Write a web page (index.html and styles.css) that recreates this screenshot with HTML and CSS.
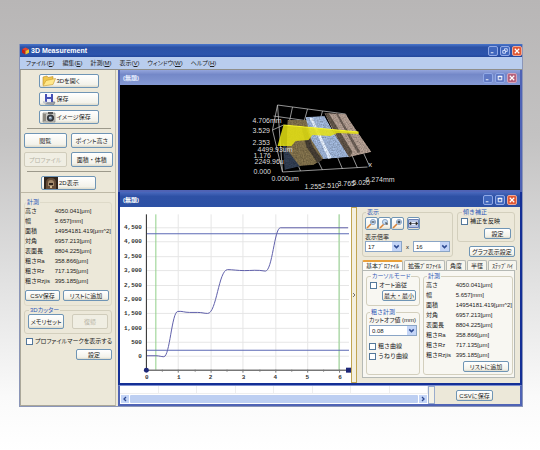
FILE: index.html
```html
<!DOCTYPE html>
<html lang="ja">
<head>
<meta charset="utf-8">
<title>3D Measurement</title>
<link rel="stylesheet" href="styles.css">
</head>
<body>
<main class="app">
  <header class="titlebar main-title">
    <svg class="logo" viewBox="0 0 8 8"><path d="M0 2 4 0 8 2 4 4z" fill="#e8442a"/><path d="M0 2 4 4V8L0 6z" fill="#c81e14"/><path d="M4 4 8 2V6L4 8z" fill="#f2c52c"/></svg>
    <h1>3D Measurement</h1>
    <div class="controls">
      <button class="ctl" aria-label="最小化"><svg viewBox="0 0 9 9"><path d="M2 6h3v1H2z" fill="#fff"/></svg></button>
      <button class="ctl" aria-label="元に戻す"><svg viewBox="0 0 9 9"><path d="M4 4V2h3v3H5M2 4h3v3H2z" fill="none" stroke="#dbe5ff"/></svg></button>
      <button class="ctl close" aria-label="閉じる"><svg viewBox="0 0 9 9"><path d="M2 2 7 7M7 2 2 7" stroke="#fff" stroke-width="1.3"/></svg></button>
    </div>
  </header>
  <nav class="menu">
    <a class="kana" href="#">ファイル(<u>F</u>)</a><a href="#">編集(<u>E</u>)</a><a href="#">計測(<u>M</u>)</a><a href="#">表示(<u>V</u>)</a><a class="kana" href="#">ウィンドウ(<u>W</u>)</a><a class="kana" href="#">ヘルプ(<u>H</u>)</a>
  </nav>
  <div class="body">
    <aside class="side">
      <section class="tools">
        <button class="btn tool kana"><svg viewBox="0 0 14 12"><path d="M1 10V2l4-1 1 1.500 5-1V5" fill="#f0c64c" stroke="#b98d28" stroke-width=".6"/><path d="M1 11 4 5.500 13.500 3.500 11 9.500z" fill="#ffe78a" stroke="#c79a2c" stroke-width=".6"/></svg>3Dを開く</button>
        <button class="btn tool"><svg viewBox="0 0 14 12"><path d="M4 8 13 9 12 11.500 3 11z" fill="#9da2ac" stroke="#60646c" stroke-width=".5"/><path d="M3 1h8v8H3z" fill="#4650b4"/><path d="M5 1h4v3H5zM5 6h4v3H5z" fill="#eef0ff"/><path d="M1 8l4 1-1 2-3-1z" fill="#c3c8d0"/></svg>保存</button>
        <button class="btn tool kana"><svg viewBox="0 0 14 12"><path d="M1 2h12v9H1z" fill="#c9c9c5" stroke="#77756f" stroke-width=".6"/><path d="M1 3h3v7H1z" fill="#8b8880"/><path d="M6 1h5v2H6z" fill="#555"/><circle cx="8.500" cy="7" r="3.600" fill="#34373c"/><circle cx="8.500" cy="7" r="1.800" fill="#7c93ab"/><circle cx="8" cy="6.500" r=".7" fill="#fff"/></svg>イメージ保存</button>
        <hr>
        <div class="pairs">
          <button class="btn">閲覧</button><button class="btn kana">ポイント高さ</button>
          <button class="btn kana" disabled>プロファイル</button><button class="btn">面積・体積</button>
        </div>
        <hr>
        <button class="btn tool two-d"><svg viewBox="0 0 14 12"><path d="M0 0h14v12H0z" fill="#30251c"/><path d="M2 12V6q0-5 5-5t5 5v6z" fill="#654d38"/><path d="M4 9V6q0-3 3-3t3 3v3z" fill="#a48b6c"/><path d="M5 6h4v2H5z" fill="#30251c"/><path d="M6 9h2v2H6z" fill="#d3bd94"/></svg>2D表示</button>
      </section>
      <section class="readout">
        <fieldset class="measure plain">
          <legend>計測</legend>
          <table>
            <tr><th>高さ</th><td>4050.041[μm]</td></tr>
            <tr><th>幅</th><td>5.657[mm]</td></tr>
            <tr><th>面積</th><td>14954181.419[μm^2]</td></tr>
            <tr><th>対角</th><td>6957.213[μm]</td></tr>
            <tr><th>表面長</th><td>8804.225[μm]</td></tr>
            <tr><th>粗さRa</th><td>358.866[μm]</td></tr>
            <tr><th>粗さRz</th><td>717.135[μm]</td></tr>
            <tr><th>粗さRzjis</th><td>395.185[μm]</td></tr>
          </table>
          <div class="actions"><button class="btn small">CSV保存</button><button class="btn small kana">リストに追加</button></div>
        </fieldset>
        <fieldset class="cutter">
          <legend class="kana">3Dカッター</legend>
          <div class="row"><button class="btn kana">メモリセット</button><button class="btn" disabled>復帰</button></div>
        </fieldset>
        <label class="check kana"><input type="checkbox">プロファイルマークを表示する</label>
        <button class="btn small set">設定</button>
      </section>
    </aside>
    <div class="mdi">
      <section class="window inactive">
        <header class="titlebar">
          <h2>(無題)</h2>
          <div class="controls">
            <button class="ctl" aria-label="最小化"><svg viewBox="0 0 9 9"><path d="M2 6h3v1H2z" fill="#fff"/></svg></button>
            <button class="ctl" aria-label="最大化"><svg viewBox="0 0 9 9"><path d="M2.500 2.500h4v4h-4zM2 3h5" fill="none" stroke="#fff"/></svg></button>
            <button class="ctl close" aria-label="閉じる"><svg viewBox="0 0 9 9"><path d="M2 2 7 7M7 2 2 7" stroke="#fff" stroke-width="1.300"/></svg></button>
          </div>
        </header>
        <svg class="scene" viewBox="120 85 399 105" role="img" aria-label="3D">
          <defs>
            <filter id="grain" x="0" y="0" width="100%" height="100%">
              <feTurbulence type="fractalNoise" baseFrequency=".7" numOctaves="2" seed="4" result="n"/>
              <feColorMatrix in="n" type="matrix" values=".9 0 0 0 -.02  .9 0 0 0 -.02  .9 0 0 0 -.02  0 0 0 0 1" result="g"/>
              <feBlend in="SourceGraphic" in2="g" mode="overlay" result="b"/>
              <feBlend in="b" in2="SourceGraphic" mode="soft-light" result="c"/>
              <feComposite in="SourceGraphic" in2="g" operator="arithmetic" k1="1.200" k2=".4" k3="0" k4="0" result="d"/>
              <feComposite in="d" in2="SourceGraphic" operator="in"/>
            </filter>
          </defs>
          <g fill="none" stroke="#b9b9b9" stroke-width=".8">
            <path d="M277 105 345 114 369 166M277 105 272 130 282 172 367 167M277 105 282 172M273 116 322 123M292 107 289 121M307 109 304 120M322 111 319 122"/>
            <path d="M272 130 283 125M300 171 295 159M322 170 315 156M342 169 336 155M357 168 350 152"/>
          </g>
          <g filter="url(#grain)">
            <path d="M282 142 287 148 301 166 284 170z" fill="#303c50"/>
            <path d="M287 120 306 120 312 140 324 158 313 165 299 166 286 149z" fill="#7f6f4a"/>
            <path d="M305 117 324 116 334 134 349 157 323 159 311 140z" fill="#9db3d6"/>
            <path d="M324 113 345 114 355 129 371 152 349 157 334 134z" fill="#b09c90"/>
            <path d="M324 113 328 113 352 152 349 158 340 143z" fill="#5f5347"/>
            <path d="M301 127 305 126 312 146 322 160 317 163 306 147z" fill="#453d33"/>
            <path d="M309 118 312 118 331 158 328 159z" fill="#dfeafa"/>
            <path d="M335 113 337 113 360 152 357 153z" fill="#6b5e55"/>
          </g>
          <path d="M277 146 283 125 358 132 358 134 337 133 330 136 312 135 308 140 295 141 291 146z" fill="#e6e312" opacity=".85"/>
          <path d="M283 125 358 132" stroke="#f6f42a"/>
          <g class="scene-text">
            <text x="252" y="123">4.706mm</text><text x="252" y="133">3.529</text><text x="252" y="145">2.353</text>
            <text x="257" y="152">4499.93um</text><text x="253" y="158">1.176</text><text x="254" y="164">2249.96u</text>
            <text x="253" y="174">0.000</text><text x="271" y="181">0.000um</text>
            <text x="304" y="189">1.255</text><text x="321" y="188">2.510</text><text x="337" y="186">3.765</text><text x="352" y="185">5.020</text><text x="365" y="182">6.274mm</text><text x="368" y="167">x</text>
          </g>
        </svg>
      </section>
      <section class="window active">
        <header class="titlebar">
          <h2>(無題)</h2>
          <div class="controls">
            <button class="ctl" aria-label="最小化"><svg viewBox="0 0 9 9"><path d="M2 6h3v1H2z" fill="#fff"/></svg></button>
            <button class="ctl" aria-label="最大化"><svg viewBox="0 0 9 9"><path d="M2.500 2.500h4v4h-4zM2 3h5" fill="none" stroke="#fff"/></svg></button>
            <button class="ctl close" aria-label="閉じる"><svg viewBox="0 0 9 9"><path d="M2 2 7 7M7 2 2 7" stroke="#fff" stroke-width="1.300"/></svg></button>
          </div>
        </header>
        <div class="work">
          <svg class="chart" viewBox="120 207 232 176" role="img" aria-label="プロファイル">
            <path d="M147 227.500H350M147 241.500H350M147 256.500H350M147 270.500H350M147 285.500H350M147 299.500H350M147 313.500H350M147 328.500H350M147 342.500H350M147 356.500H350M178.500 214V370M211.500 214V370M243.500 214V370M276.500 214V370M308.500 214V370M340.500 214V370" stroke="#e6e6e6"/>
            <path d="M156 214V370M340 214V370" stroke="#8fd088"/>
            <path d="M147 233.500H350M147 350.500H350" stroke="#5b68b4"/>
            <path d="M147 356H156C160 356 161 357 164 357C170 357 172 312 178 311.500C183 311 184 312.500 190 312.500H198C203 312.500 204 313.500 208 313.500C217 313.500 219 270 228 269.500C233 269.500 238 270.500 245 270.500S258 269.500 266 271C273 271 275 228 281 227.500H349" fill="none" stroke="#5f5fa9"/>
            <path d="M146.500 214V370.500" stroke="#222"/>
            <path d="M146 370.500H350" stroke="#333"/>
            <path d="M162.500 370v2M178.500 370v3M195.500 370v2M211.500 370v3M227.500 370v2M243.500 370v3M260.500 370v2M276.500 370v3M292.500 370v2M308.500 370v3M324.500 370v2M340.500 370v3" stroke="#777"/>
            <circle cx="146.500" cy="370.500" r="2.500" fill="#1d2779"/><path d="M347 368h5v5h-5z" fill="#1d2779"/>
            <g class="axis" text-anchor="end">
              <text x="142" y="229">4,500</text><text x="142" y="243">4,000</text><text x="142" y="258">3,500</text><text x="142" y="272">3,000</text><text x="142" y="287">2,500</text><text x="142" y="301">2,000</text><text x="142" y="315">1,500</text><text x="142" y="330">1,000</text><text x="142" y="344">500</text><text x="142" y="358">0</text>
            </g>
            <g class="axis" text-anchor="middle">
              <text x="147" y="379">0</text><text x="179" y="379">1</text><text x="211" y="379">2</text><text x="244" y="379">3</text><text x="276" y="379">4</text><text x="308" y="379">5</text><text x="341" y="379">6</text>
            </g>
          </svg>
          <button class="splitter" aria-label="折りたたむ"><svg viewBox="0 0 4 6"><path d="M1 1 3 3 1 5" fill="none" stroke="#555" stroke-width=".8"/></svg></button>
          <div class="panel">
            <div class="top">
              <fieldset class="display">
                <legend>表示</legend>
                <div class="zooms">
                  <button class="btn icon" aria-label="縮小"><svg viewBox="0 0 11 11"><path d="M1 10 5 6" stroke="#d98238" stroke-width="1.600"/><circle cx="7" cy="4" r="2.600" fill="#c8def5" stroke="#7b97bb" stroke-width=".8"/><path d="M5.500 4h3" stroke="#222"/></svg></button>
                  <button class="btn icon" aria-label="等倍"><svg viewBox="0 0 11 11"><path d="M1 10 5 6" stroke="#d98238" stroke-width="1.600"/><circle cx="6" cy="4" r="2.600" fill="#c8def5" stroke="#7b97bb" stroke-width=".8"/><path d="M6 5h2v2" fill="none" stroke="#444"/></svg></button>
                  <button class="btn icon" aria-label="拡大"><svg viewBox="0 0 11 11"><path d="M1 10 5 6" stroke="#d98238" stroke-width="1.600"/><circle cx="7" cy="4" r="2.600" fill="#c8def5" stroke="#7b97bb" stroke-width=".8"/><path d="M5.500 4h3M7 2.500v3" stroke="#222"/></svg></button>
                  <button class="btn icon fit" aria-label="全体"><svg viewBox="0 0 11 11"><path d="M.5 1.500h10v8H.5z" fill="#e8f0ff" stroke="#6a80b8"/><path d="M1 3h9M1 8h9" stroke="#6a80b8" stroke-width=".8"/><path d="M1 5.500 3 4v3zM10 5.500 8 4v3zM3 5.500h5" fill="#222" stroke="#222" stroke-width=".6"/></svg></button>
                </div>
                <label class="lbl" for="sx">表示倍率</label>
                <div class="ratio">
                  <span class="combo"><select id="sx"><option>17</option></select><svg viewBox="0 0 8 8"><path d="M2 3 4 5 6 3" fill="none" stroke="#2d4a92" stroke-width="1.300"/></svg></span>
                  <span>x</span>
                  <span class="combo"><select aria-label="縦倍率"><option>16</option></select><svg viewBox="0 0 8 8"><path d="M2 3 4 5 6 3" fill="none" stroke="#2d4a92" stroke-width="1.300"/></svg></span>
                </div>
              </fieldset>
              <div class="tilt-col">
                <fieldset class="tilt">
                  <legend>傾き補正</legend>
                  <label class="check"><input type="checkbox">補正を反映</label>
                  <button class="btn small">設定</button>
                </fieldset>
                <button class="btn small graph kana">グラフ表示設定</button>
              </div>
            </div>
            <div class="tabs" role="tablist">
              <button class="on" role="tab">基本ﾌﾟﾛﾌｧｲﾙ</button><button role="tab">拡張ﾌﾟﾛﾌｧｲﾙ</button><button role="tab">角度</button><button role="tab">半径</button><button role="tab">ｽﾃｯﾌﾟﾊｲ</button>
            </div>
            <div class="page">
              <div class="col">
                <fieldset class="cursor">
                  <legend class="kana">カーソルモード</legend>
                  <label class="check kana"><input type="checkbox">オート追従</label>
                  <button class="btn small">最大・最小</button>
                </fieldset>
                <fieldset class="rough">
                  <legend>粗さ計測</legend>
                  <label class="lbl kana" for="cut">カットオフ値 (mm)</label>
                  <span class="combo"><select id="cut"><option>0.08</option></select><svg viewBox="0 0 8 8"><path d="M2 3 4 5 6 3" fill="none" stroke="#2d4a92" stroke-width="1.300"/></svg></span>
                  <label class="check"><input type="checkbox">粗さ曲線</label>
                  <label class="check"><input type="checkbox">うねり曲線</label>
                </fieldset>
              </div>
              <fieldset class="measure">
                <legend>計測</legend>
                <table>
                  <tr><th>高さ</th><td>4050.041[μm]</td></tr>
                  <tr><th>幅</th><td>5.657[mm]</td></tr>
                  <tr><th>面積</th><td>14954181.419[μm^2]</td></tr>
                  <tr><th>対角</th><td>6957.213[μm]</td></tr>
                  <tr><th>表面長</th><td>8804.225[μm]</td></tr>
                  <tr><th>粗さRa</th><td>358.866[μm]</td></tr>
                  <tr><th>粗さRz</th><td>717.135[μm]</td></tr>
                  <tr><th>粗さRzjis</th><td>395.185[μm]</td></tr>
                </table>
                <button class="btn small add kana">リストに追加</button>
              </fieldset>
            </div>
          </div>
        </div>
      </section>
      <section class="window lower">
        <div class="list">
          <div class="cells"><i></i><i></i><i></i><i></i><i></i><i></i><i></i><i></i></div>
          <div class="scroll">
            <button aria-label="左へ"><svg viewBox="0 0 8 8"><path d="M5 2 3 4 5 6" fill="none" stroke="#2d4a92" stroke-width="1.300"/></svg></button>
            <div class="thumb"></div>
            <button aria-label="右へ"><svg viewBox="0 0 8 8"><path d="M3 2 5 4 3 6" fill="none" stroke="#2d4a92" stroke-width="1.300"/></svg></button>
          </div>
        </div>
        <div class="split2"></div>
        <div class="save"><button class="btn small">CSVに保存</button></div>
      </section>
    </div>
  </div>
</main>
</body>
</html>
```
FILE: styles.css
```css
* { box-sizing: border-box; }
html { min-height: 100%; }
body {
  margin: 0;
  padding: 44px 17px 44px 19px;
  background: linear-gradient(#b8b6b6 0, #c3c2c2 30%, #dfdfdf 60%, #fafafa 88%, #fff 100%);
  font: 6px/8px "Liberation Sans", "Noto Sans CJK JP", sans-serif;
  color: #222;
}
button, select, input, h1, h2 { font: inherit; color: inherit; margin: 0; padding: 0; }
svg { display: block; flex: none; }
.kana { font-feature-settings: "palt"; }

.app { background: #ece8d9; border: 1px solid #8b96b8; border-top: 0; }
.titlebar { display: flex; align-items: center; height: 15px; padding: 0 3px; color: #fff; font-weight: bold; }
.main-title { height: 13px; padding: 0 0 0 2px; background: linear-gradient(#4a76cc 0, #2b51a6 25%, #2c54ac 80%, #23479b 100%); gap: 2px; }
h1 { font-size: 7px; font-weight: bold; }
h2 { font-weight: bold; }
.logo { width: 7px; height: 8px; }
.controls { display: flex; gap: 2px; margin-left: auto; }
.ctl { width: 10px; height: 10px; border: 1px solid #91a9e6; border-radius: 2px; background: #4067bd; }
.ctl svg { width: 8px; height: 8px; }
.ctl.close { background: #df5835; border-color: #eea896; }

.menu { display: flex; align-items: center; gap: 8px; height: 12px; padding-left: 6px; background: #b9cdee; }
.menu a { color: #222; text-decoration: none; }

.body { display: flex; gap: 2px; border-top: 1px solid #8f8f8b; }
.side { display: flex; flex-direction: column; width: 96px; border-left: 1px solid #aaa799; }
.tools { display: flex; flex-direction: column; align-items: center; gap: 4px; padding: 4px 2px 2px 3px; border-right: 1px solid #c6c1af; border-bottom: 1px solid #bdb8a6; }
.btn {
  display: flex; align-items: center; justify-content: center;
  height: 15px; border: 1px solid #6f95b5; border-radius: 2px;
  background: linear-gradient(#fff, #f3f2ea 80%, #dcdacb);
  white-space: nowrap;
}
.btn:disabled { color: #b5b2a3; border-color: #d0ccbb; background: #f0eee3; }
.small { height: 11px; }
.tool { width: 60px; height: 14px; justify-content: flex-start; gap: 1px; padding-left: 2px; }
.tool svg { width: 14px; height: 12px; }
.two-d { width: 55px; }
hr { width: 84px; margin: 0; border: 0; border-top: 1px solid #9c998b; }
.pairs { display: grid; grid-template-columns: 1fr 1fr; gap: 4px; width: 100%; }

.readout { display: flex; flex: 1; flex-direction: column; padding: 5px 3px 0 3px; border-right: 1px solid #c6c1af; border-bottom: 1px solid #aaa799; }
fieldset { min-width: 0; margin: 0; padding: 0 3px; border: 1px solid #d3cfbd; border-radius: 3px; }
legend { margin-left: 1px; padding: 0 1px; color: #2f58b8; }
table { border-collapse: collapse; width: 100%; }
th, td { height: 10px; padding: 0; text-align: left; font-weight: normal; white-space: nowrap; }
th { width: 32px; }
.plain { padding: 0 0 4px 0; border-color: #dedac9; }
.actions { display: flex; gap: 3px; margin-top: 4px; }
.actions .btn:first-child { width: 35px; }
.actions .btn:last-child { width: 46px; }
.cutter { padding: 0 3px 4px; }
.row { display: flex; gap: 8px; }
.row .btn { width: 36px; }
.check { display: flex; align-items: center; gap: 2px; height: 10px; white-space: nowrap; }
.check input { appearance: none; flex: none; width: 7px; height: 7px; border: 1px solid #54789b; background: #fff; }
.readout .check { margin: 2px 0 3px 2px; }
.set { align-self: flex-end; width: 36px; }

.mdi { display: flex; flex: 1; flex-direction: column; min-width: 0; }
.window { border: 2px solid #4f63b5; border-top: 0; }
.inactive .titlebar { background: linear-gradient(#94a5dc, #7488c8 30%, #8499d4); color: #e8eeff; }
.inactive .ctl { background: #6079c4; }
.inactive .close { background: #b5617c; border-color: #d3a3bd; }
.active { border-color: #142f96; }
.active .titlebar { background: linear-gradient(#4a69bd, #2e51a5 30%, #2c50a4); }
.scene { width: 100%; height: 105px; background: #000; }
.scene-text { font: 7px "Liberation Sans", sans-serif; fill: #ddd; }

.work { display: flex; background: #ece8d9; }
.chart { flex: 1; min-width: 0; height: 176px; background: #fff; }
.axis { font: bold 6px "Liberation Mono", monospace; fill: #333; }
.splitter { display: flex; align-items: center; justify-content: center; width: 6px; border: 1px solid #c1a552; background: #f4f0df; }
.splitter svg { width: 4px; height: 6px; }
.panel { width: 163px; padding: 1px 5px 3px; }
.top { display: flex; gap: 4px; }
.display { width: 91px; padding: 0 2px 1px; }
.zooms { display: flex; margin: 1px 0 3px; }
.icon { width: 13px; height: 13px; }
.icon svg { width: 11px; height: 11px; }
.fit { margin-left: 3px; }
.lbl { display: block; white-space: nowrap; }
.ratio { display: flex; align-items: center; justify-content: space-between; }
.combo { position: relative; display: block; width: 37px; }
.combo select { appearance: none; display: block; width: 100%; height: 11px; padding-left: 2px; border: 1px solid #8aa5c6; border-radius: 0; background: #fff; }
.combo svg { position: absolute; right: 1px; top: 1px; width: 9px; height: 9px; background: #c4d5f7; pointer-events: none; }
.tilt-col { display: flex; flex: 1; flex-direction: column; align-items: flex-end; gap: 4px; }
.tilt { width: 100%; padding: 0 3px 2px; }
.tilt .btn { width: 27px; margin: 2px 0 0 auto; }
.graph { width: 46px; }
.tabs { display: flex; gap: 1px; margin-top: 3px; }
.tabs button { height: 10px; padding: 0 3px; border: 1px solid #b5b9b5; border-bottom: 0; border-radius: 2px 2px 0 0; background: #f6f5ee; white-space: nowrap; }
.tabs .on { border-top: 2px solid #e9a03b; background: #fcfcfa; }
.page { display: flex; gap: 3px; padding: 1px 1px 2px 3px; border: 1px solid #b5b9b5; background: #f8f7f2; }
.col { display: flex; flex-direction: column; gap: 2px; width: 54px; }
.cursor { padding-bottom: 4px; }
.cursor .btn { width: 34px; margin-left: auto; }
.rough { flex: 1; padding: 0 2px; }
.rough .combo { width: 100%; margin: 1px 0 5px; }
.page .measure { flex: 1; padding: 0 0 2px 2px; }
.page th { width: 30px; }
.add { width: 46px; margin: 1px 3px 0 auto; }

.lower { display: flex; border-top: 1px solid #7e8fd0; background: #ece8d9; }
.list { flex: 1; background: #fff; }
.cells { display: grid; grid-template-columns: repeat(8, 1fr); height: 8px; border-bottom: 1px solid #eee; }
.cells i { border-right: 1px solid #eee; }
.scroll { display: flex; gap: 1px; padding: 1px; }
.scroll button { width: 8px; height: 8px; border: 0; background: #c4d5f7; }
.scroll svg { width: 8px; height: 8px; }
.thumb { flex: 1; border-radius: 1px; background: #bdcff2; }
.split2 { width: 7px; border: 1px solid #9aaccc; background: #f4f2e7; }
.save { width: 85px; padding: 4px 0 0 21px; }
.save .btn { width: 37px; }
```
